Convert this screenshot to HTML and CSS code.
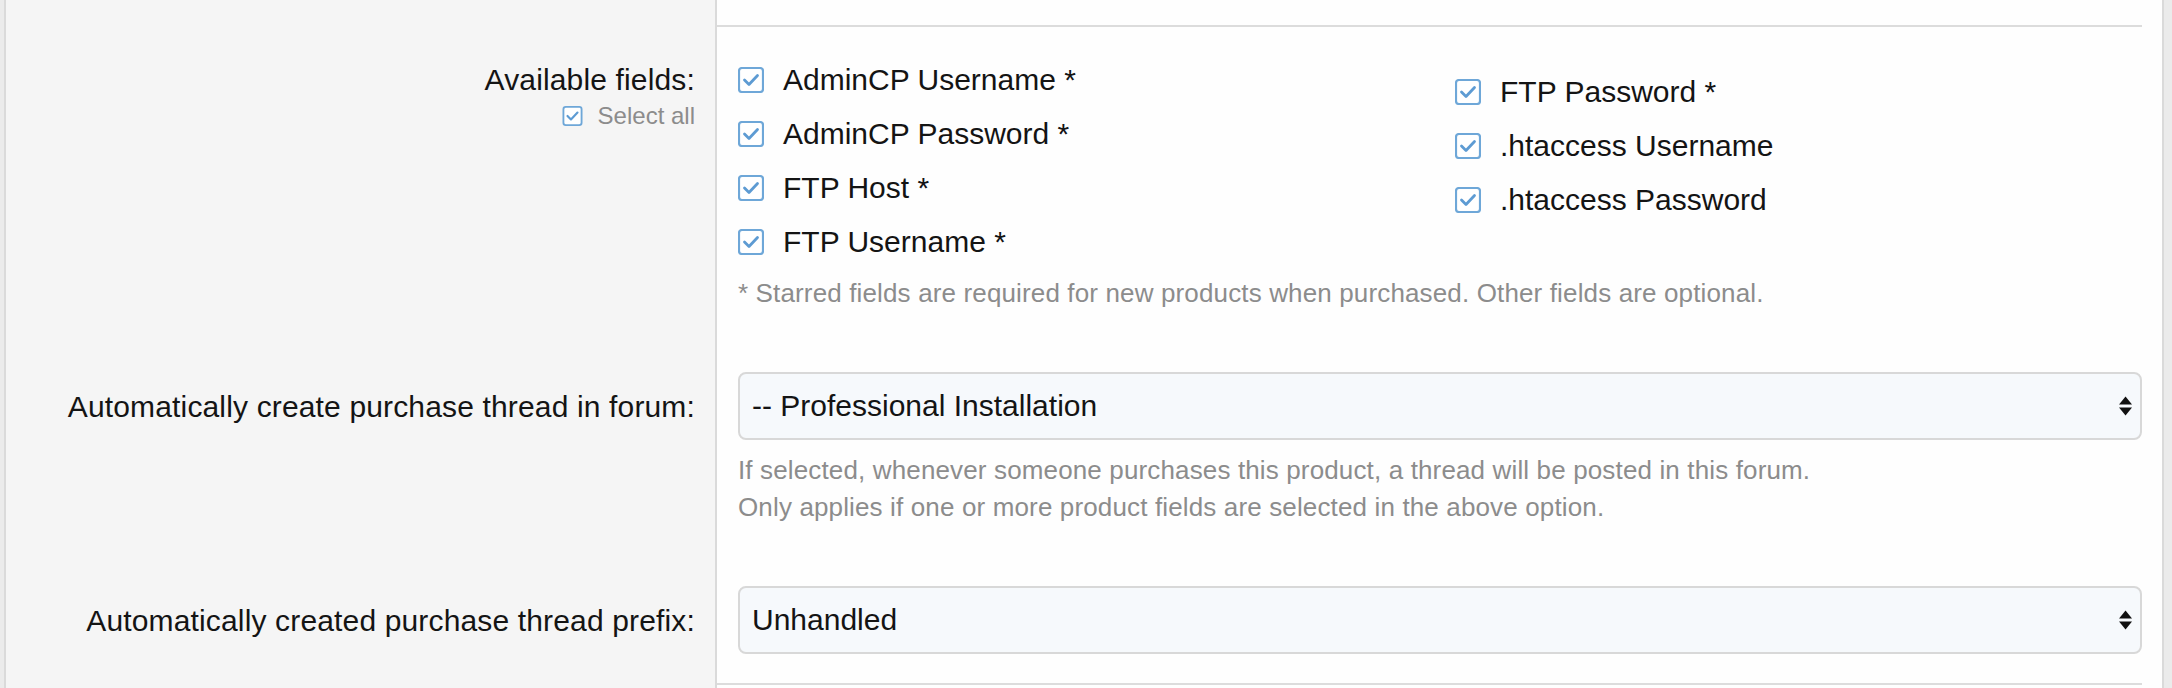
FILE: index.html
```html
<!DOCTYPE html>
<html lang="en">
<head>
<meta charset="utf-8">
<title>Product options</title>
<link rel="stylesheet" href="styles.css">
</head>
<body>
<div class="panel">
  <div class="row row--tail-top">
    <div class="row-label"></div>
    <div class="row-body"></div>
  </div>
  <div class="row row--sep">
    <div class="row-label"></div>
    <div class="row-body"><div class="rule"></div></div>
  </div>

  <div class="row">
    <div class="row-label">
      <div class="label">Available fields:</div>
      <label class="select-all">
        <svg class="cb cb--small" viewBox="0 0 26 26" width="21" height="20" aria-hidden="true"><rect x="1.2" y="1.2" width="23.6" height="23.6" rx="3" class="cb-box"/><path d="M6.5 13 L11 17.5 L19.5 8.5" class="cb-check"/></svg>
        <span>Select all</span>
      </label>
    </div>
    <div class="row-body">
      <div class="choices">
        <ul class="choice-col">
          <li class="choice"><svg class="cb" viewBox="0 0 26 26" width="26" height="26" aria-hidden="true"><rect x="1" y="1" width="24" height="24" rx="3" class="cb-box"/><path d="M6.5 13 L11 17.5 L19.5 8.5" class="cb-check"/></svg><span>AdminCP Username *</span></li>
          <li class="choice"><svg class="cb" viewBox="0 0 26 26" width="26" height="26" aria-hidden="true"><rect x="1" y="1" width="24" height="24" rx="3" class="cb-box"/><path d="M6.5 13 L11 17.5 L19.5 8.5" class="cb-check"/></svg><span>AdminCP Password *</span></li>
          <li class="choice"><svg class="cb" viewBox="0 0 26 26" width="26" height="26" aria-hidden="true"><rect x="1" y="1" width="24" height="24" rx="3" class="cb-box"/><path d="M6.5 13 L11 17.5 L19.5 8.5" class="cb-check"/></svg><span>FTP Host *</span></li>
          <li class="choice"><svg class="cb" viewBox="0 0 26 26" width="26" height="26" aria-hidden="true"><rect x="1" y="1" width="24" height="24" rx="3" class="cb-box"/><path d="M6.5 13 L11 17.5 L19.5 8.5" class="cb-check"/></svg><span>FTP Username *</span></li>
        </ul>
        <ul class="choice-col choice-col--second">
          <li class="choice"><svg class="cb" viewBox="0 0 26 26" width="26" height="26" aria-hidden="true"><rect x="1" y="1" width="24" height="24" rx="3" class="cb-box"/><path d="M6.5 13 L11 17.5 L19.5 8.5" class="cb-check"/></svg><span>FTP Password *</span></li>
          <li class="choice"><svg class="cb" viewBox="0 0 26 26" width="26" height="26" aria-hidden="true"><rect x="1" y="1" width="24" height="24" rx="3" class="cb-box"/><path d="M6.5 13 L11 17.5 L19.5 8.5" class="cb-check"/></svg><span>.htaccess Username</span></li>
          <li class="choice"><svg class="cb" viewBox="0 0 26 26" width="26" height="26" aria-hidden="true"><rect x="1" y="1" width="24" height="24" rx="3" class="cb-box"/><path d="M6.5 13 L11 17.5 L19.5 8.5" class="cb-check"/></svg><span>.htaccess Password</span></li>
        </ul>
      </div>
      <p class="hint">* Starred fields are required for new products when purchased. Other fields are optional.</p>
    </div>
  </div>

  <div class="row">
    <div class="row-label row-label--input">
      <div class="label">Automatically create purchase thread in forum:</div>
    </div>
    <div class="row-body">
      <div class="select" role="listbox">
        <span>-- Professional Installation</span>
        <svg class="select-arrows" viewBox="0 0 13 20" width="13" height="20" aria-hidden="true"><polygon points="0,8.5 6.5,0.5 13,8.5"/><polygon points="0,11.5 13,11.5 6.5,19.5"/></svg>
      </div>
      <p class="hint hint--after">If selected, whenever someone purchases this product, a thread will be posted in this forum.<br>Only applies if one or more product fields are selected in the above option.</p>
    </div>
  </div>

  <div class="row">
    <div class="row-label row-label--input">
      <div class="label">Automatically created purchase thread prefix:</div>
    </div>
    <div class="row-body">
      <div class="select" role="listbox">
        <span>Unhandled</span>
        <svg class="select-arrows" viewBox="0 0 13 20" width="13" height="20" aria-hidden="true"><polygon points="0,8.5 6.5,0.5 13,8.5"/><polygon points="0,11.5 13,11.5 6.5,19.5"/></svg>
      </div>
    </div>
  </div>

  <div class="row row--sep">
    <div class="row-label"></div>
    <div class="row-body"><div class="rule"></div></div>
  </div>
  <div class="row row--tail-bottom">
    <div class="row-label"></div>
    <div class="row-body"></div>
  </div>
</div>
</body>
</html>
```

FILE: styles.css
```css
* {
  box-sizing: border-box;
}

html, body {
  margin: 0;
  padding: 0;
  background: #ebebeb;
  height: 100%;
  overflow: hidden;
}

body {
  font-family: "Liberation Sans", Arial, Helvetica, sans-serif;
  color: #141414;
  font-size: 30px;
  line-height: 42px;
}

.panel {
  margin: 0 8px 0 4px;
  border-left: 2px solid #dadada;
  border-right: 2px solid #dadada;
  background: #fefefe;
}

.row {
  display: grid;
  grid-template-columns: 711px 1fr;
}

.row-label {
  background: #f5f5f5;
  border-right: 2px solid #dadada;
  padding: 32px 20px 29px 20px;
  text-align: right;
}

.row-label--input {
  padding-top: 45.5px;
}

.row-body {
  background: #fefefe;
  padding: 32px 20px 29px 21px;
}

.row--tail-top .row-label,
.row--tail-top .row-body {
  padding: 0;
  height: 25px;
}

.row--tail-bottom .row-label,
.row--tail-bottom .row-body {
  padding: 0;
  height: 40px;
}

.row--sep .row-label,
.row--sep .row-body {
  padding: 0;
}

.row--sep .row-body {
  padding-right: 20px;
}

.rule {
  height: 2px;
  background: #dcdcdc;
}

.label {
  color: #141414;
  letter-spacing: 0.15px;
}

.select-all {
  display: flex;
  justify-content: flex-end;
  align-items: center;
  gap: 15px;
  font-size: 24px;
  line-height: 30px;
  color: #8c8c8c;
}

.cb {
  display: block;
  flex: none;
}

.cb-box {
  fill: #ffffff;
  stroke: #6ea7d8;
  stroke-width: 2.2;
}

.cb-check {
  fill: none;
  stroke: #5d9bd3;
  stroke-width: 2.8;
  stroke-linecap: round;
  stroke-linejoin: round;
}

.cb--small .cb-box {
  stroke-width: 2.4;
}

.choices {
  display: grid;
  grid-template-columns: 1fr 1fr;
  column-gap: 30px;
}

.choice-col {
  list-style: none;
  margin: 0;
  padding: 0;
}

.choice-col--second {
  padding-top: 12px;
}

.choice {
  display: flex;
  align-items: center;
  gap: 19px;
  margin-bottom: 12px;
  color: #141414;
}

.hint {
  margin: 0;
  font-size: 26px;
  line-height: 1.4;
  letter-spacing: 0.14px;
  color: #8c8c8c;
}

.hint--after {
  margin-top: 12px;
}

.select {
  display: flex;
  align-items: center;
  justify-content: space-between;
  border: 2px solid #d8d8d8;
  border-radius: 8px;
  background: #f6f9fc;
  padding: 11px 8px 11px 12px;
  color: #141414;
}

.select-arrows {
  display: block;
  fill: #111111;
}
```
